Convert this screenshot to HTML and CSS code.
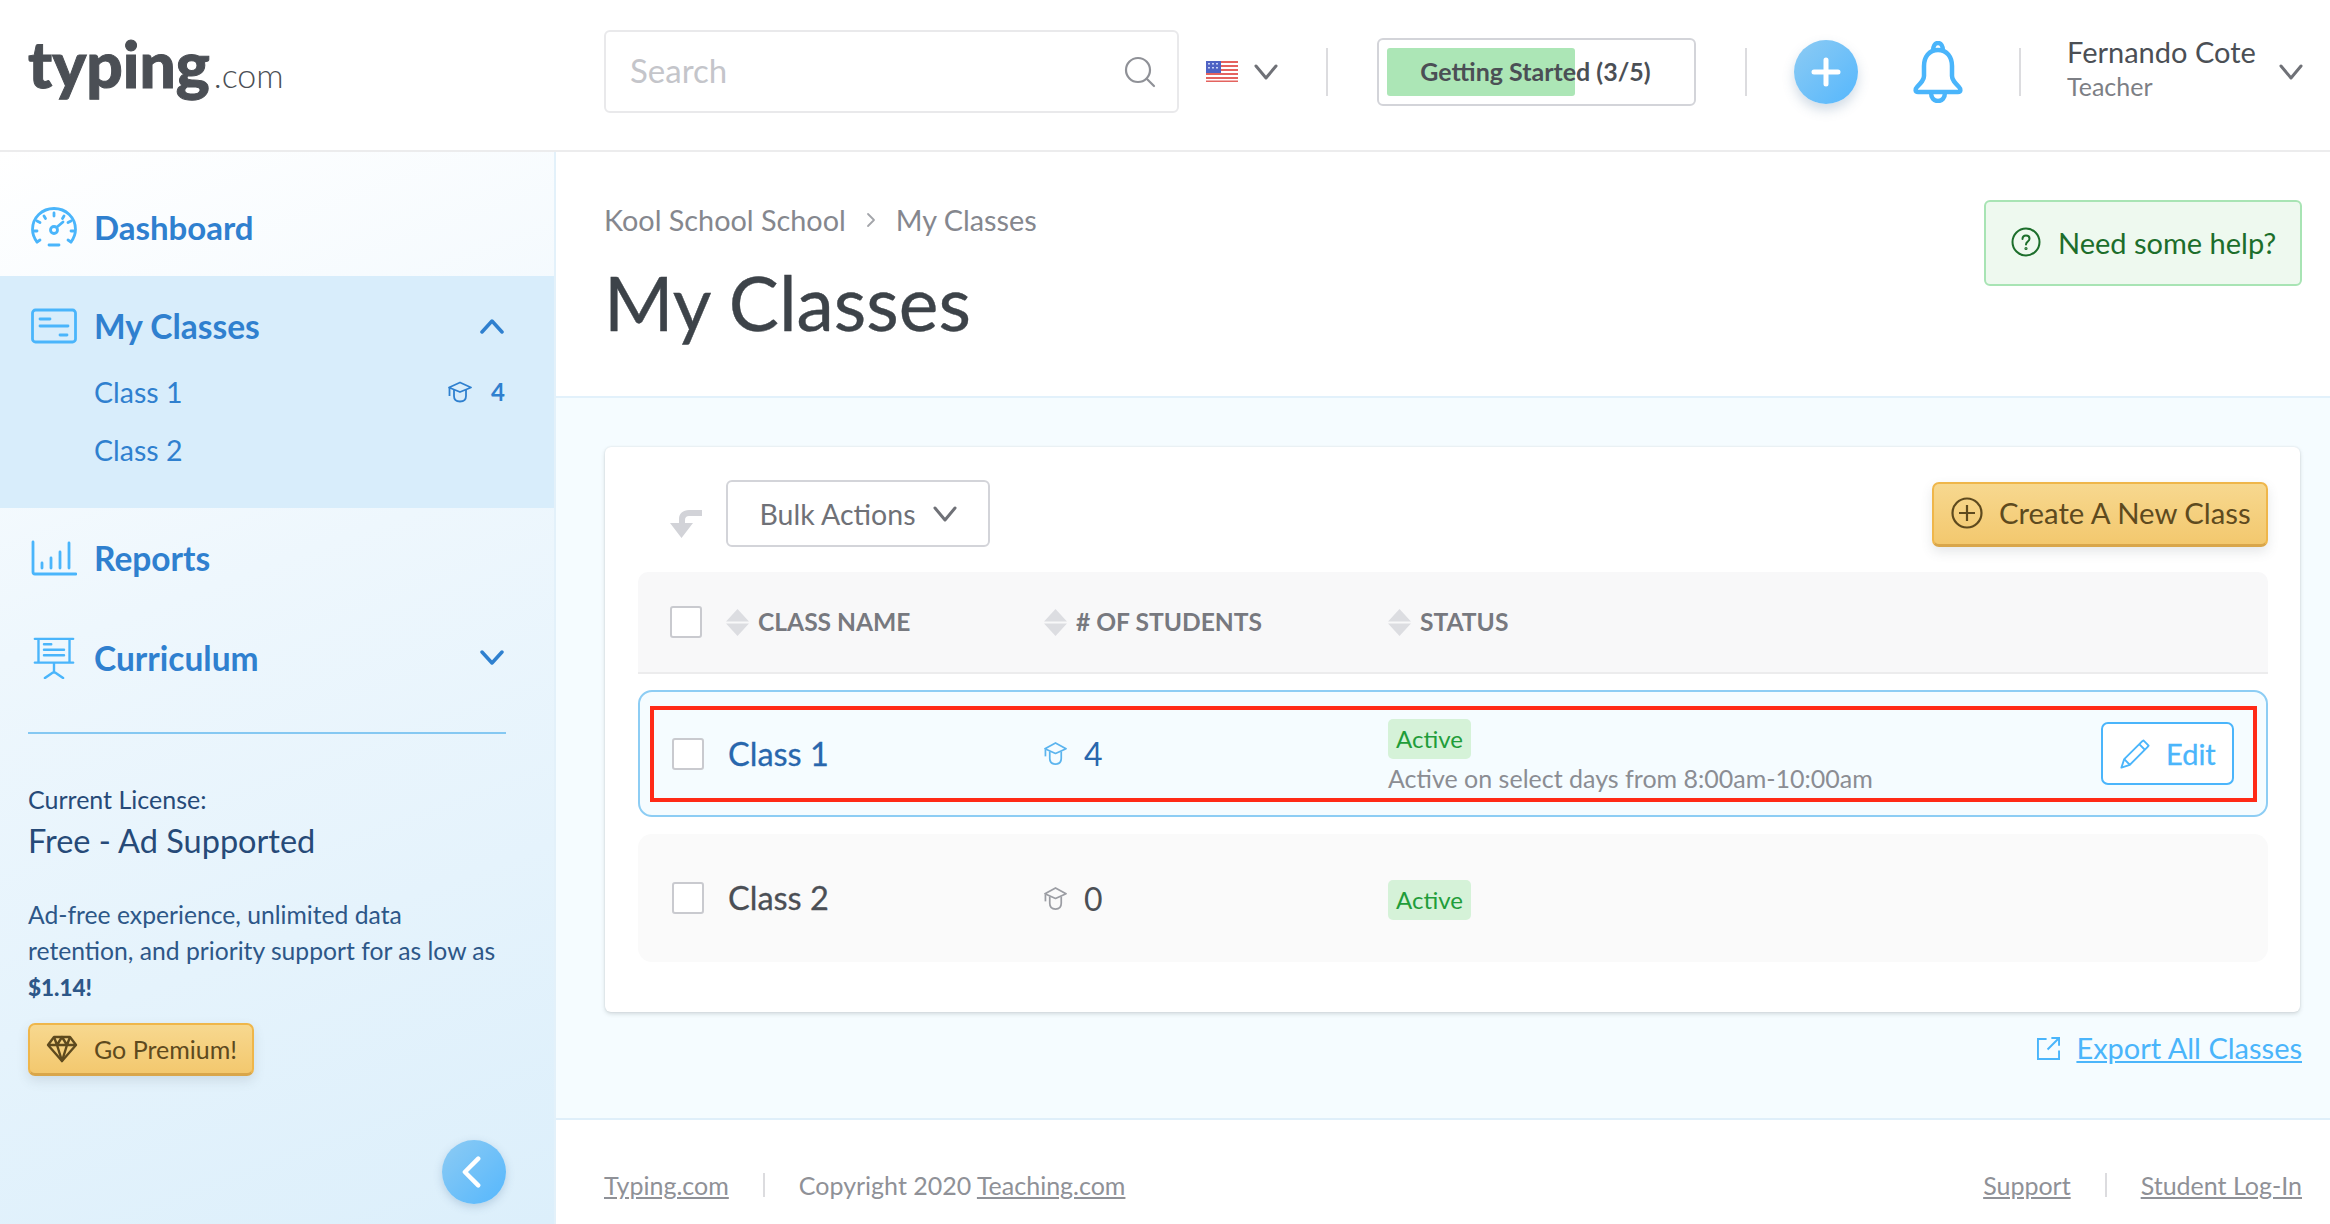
FILE: index.html
```html
<!DOCTYPE html>
<html lang="en">
<head>
<meta charset="utf-8">
<title>My Classes - typing.com</title>
<link rel="stylesheet" href="styles.css">
</head>
<body>
<header class="topbar">
  <div class="logo"><span class="logo-main">typing</span><span class="logo-com">.com</span></div>
  <div class="search">
    <span class="search-text">Search</span>
    <svg class="search-icon" viewBox="0 0 32 32" fill="none" stroke="#8f9197" stroke-width="2.2" stroke-linecap="round"><circle cx="14" cy="14" r="12"/><path d="M23 23l7 7"/></svg>
  </div>
  <svg class="flag" viewBox="0 0 32 21"><rect width="32" height="21" fill="#fff"/><g fill="#e4635f"><rect width="32" height="2"/><rect y="4" width="32" height="2"/><rect y="8" width="32" height="2"/><rect y="12" width="32" height="2"/><rect y="16" width="32" height="2"/><rect y="19.5" width="32" height="1.5"/></g><rect width="15" height="12" fill="#4f63c4"/><g fill="#c8d2f4"><rect x="2" y="2" width="2" height="1.5"/><rect x="6" y="2" width="2" height="1.5"/><rect x="10" y="2" width="2" height="1.5"/><rect x="2" y="6" width="2" height="1.5"/><rect x="6" y="6" width="2" height="1.5"/><rect x="10" y="6" width="2" height="1.5"/></g></svg>
  <svg class="chev flag-chev" viewBox="0 0 24 16" fill="none" stroke="#6f7177" stroke-width="3" stroke-linecap="round" stroke-linejoin="round"><path d="M2 2l10 12L22 2"/></svg>
  <span class="vline vline-a"></span>
  <div class="progress">
    <span class="progress-fill" style="width:59.7%"></span>
    <span class="progress-text">Getting Started (3/5)</span>
  </div>
  <span class="vline vline-b"></span>
  <div class="add-btn">
    <svg viewBox="0 0 32 32" fill="none" stroke="#fff" stroke-width="5" stroke-linecap="round"><path d="M16 4v24M4 16h24"/></svg>
  </div>
  <svg class="bell" viewBox="0 0 50 62" fill="none" stroke="#4ab5fb" stroke-width="4.5" stroke-linejoin="round"><path d="M25 9c-9 0-14 7-14 16v10c0 4-3 7-7 11-2 2-2 5 1 5h40c3 0 3-3 1-5-4-4-7-7-7-11V25c0-9-5-16-14-16z"/><path d="M20 10c0-5 2-8 5-8s5 3 5 8"/><path d="M18 51c0 6 3 9 7 9s7-3 7-9"/></svg>
  <span class="vline vline-c"></span>
  <div class="user">
    <div class="user-name">Fernando Cote</div>
    <div class="user-role">Teacher</div>
  </div>
  <svg class="chev user-chev" viewBox="0 0 24 16" fill="none" stroke="#6f7177" stroke-width="3" stroke-linecap="round" stroke-linejoin="round"><path d="M2 2l10 12L22 2"/></svg>
</header>

<div class="layout">
  <aside class="sidebar">
    <nav class="nav">
      <a class="nav-item nav-first">
        <svg class="nav-icon" viewBox="0 0 46 40" fill="none" stroke="#4ab5fb" stroke-width="2.8" stroke-linecap="round"><path d="M6 35C3 31 1.500 27 1.500 22.500 1.500 10.500 11 1.500 23 1.500s21.500 9 21.500 21c0 4.500-1.500 8.500-4.500 12.500"/><path d="M23 6v3M13 9l1.500 2.500M33 9l-1.500 2.500M6 14l3 1.500M40 14l-3 1.500M3 24h3M40 24h3M6 35l3-2M40 35l-3-2M18 38h10"/><circle cx="23" cy="23" r="3.500"/><path d="M26 20l6-5"/></svg>
        <span class="nav-label">Dashboard</span>
      </a>
      <div class="nav-group">
        <a class="nav-item nav-head">
          <svg class="nav-icon" viewBox="0 0 46 36" fill="none" stroke="#4ab5fb" stroke-width="2.8" stroke-linecap="round"><rect x="1.500" y="2" width="43" height="32" rx="3"/><path d="M9 11h10M9 18h28M29 27h7"/></svg>
          <span class="nav-label">My Classes</span>
          <svg class="nav-chev" viewBox="0 0 24 16" fill="none" stroke="#2f80cf" stroke-width="3.500" stroke-linecap="round" stroke-linejoin="round"><path d="M2 14L12 3l10 11"/></svg>
        </a>
        <a class="sub-item"><span class="sub-label">Class 1</span>
          <svg class="cap" viewBox="0 0 24 22" fill="none" stroke="#2f80cf" stroke-width="1.800" stroke-linejoin="round"><path d="M12 1.500L23 6.500 12 11 1 6.500z"/><path d="M6 9v6c0 3.500 2.500 5.500 6 5.500s6-2 6-5.500V9"/><path d="M1.500 7v8"/></svg>
          <span class="sub-count">4</span></a>
        <a class="sub-item"><span class="sub-label">Class 2</span></a>
      </div>
      <a class="nav-item">
        <svg class="nav-icon" viewBox="0 0 46 36" fill="none" stroke="#4ab5fb" stroke-width="2.800" stroke-linecap="round" stroke-linejoin="round"><path d="M2 2v30a2 2 0 0 0 2 2h41"/><path d="M11 23v5M20 18v10M29 12v16M38 3v25"/></svg>
        <span class="nav-label">Reports</span>
      </a>
      <a class="nav-item">
        <svg class="nav-icon" viewBox="0 0 46 46" fill="none" stroke="#4ab5fb" stroke-width="2.600" stroke-linecap="round"><path d="M2 2h42M2 28h42M6 2v26M40 2v26M23 28v11M23 38l-10 7M23 38l10 7M12 8h8M12 14h22M12 20h22"/></svg>
        <span class="nav-label">Curriculum</span>
        <svg class="nav-chev" viewBox="0 0 24 16" fill="none" stroke="#2f80cf" stroke-width="3.500" stroke-linecap="round" stroke-linejoin="round"><path d="M2 2l10 11L22 2"/></svg>
      </a>
    </nav>
    <div class="promo">
      <div class="license-label">Current License:</div>
      <div class="license-name">Free - Ad Supported</div>
      <p class="promo-text">Ad-free experience, unlimited data<br>retention, and priority support for as low as<br><strong>$1.14!</strong></p>
      <a class="btn-gold btn-premium">
        <svg class="gem" viewBox="0 0 32 28" fill="none" stroke="#5e4a1e" stroke-width="2.400" stroke-linejoin="round"><path d="M8 2h16l6 8-14 16L2 10z"/><path d="M2 10h28M11 10l5 16 5-16M8 2l3 8 5-8 5 8 3-8"/></svg>
        <span>Go Premium!</span>
      </a>
      <div class="collapse-row">
        <div class="collapse-btn"><svg viewBox="0 0 24 36" fill="none" stroke="#fff" stroke-width="5" stroke-linecap="round" stroke-linejoin="round"><path d="M19 3L4 18l15 15"/></svg></div>
      </div>
    </div>
  </aside>

  <main class="content">
    <section class="page-head">
      <div>
        <div class="crumbs"><span>Kool School School</span>
          <svg class="crumb-sep" viewBox="0 0 10 16" fill="none" stroke="#a3a5aa" stroke-width="1.800" stroke-linecap="round" stroke-linejoin="round"><path d="M2 2l6 6-6 6"/></svg>
          <span>My Classes</span></div>
        <h1 class="title">My Classes</h1>
      </div>
      <a class="help">
        <svg class="help-icon" viewBox="0 0 30 30" fill="none" stroke="#1c6e2b" stroke-width="2"><circle cx="15" cy="15" r="13.500"/><path d="M11.500 12c0-2.200 1.500-3.500 3.500-3.500s3.500 1.300 3.500 3.200c0 2.800-3.500 2.800-3.500 5.800" stroke-linecap="round"/><circle cx="15" cy="21.500" r=".6"/></svg>
        <span>Need some help?</span>
      </a>
    </section>

    <section class="body-area">
      <div class="card">
        <div class="toolbar">
          <svg class="undo" viewBox="0 0 32 28" fill="#d2d3d8"><path d="M32 0v6H19c-2.500 0-4 1.500-4 4v3h8L11.500 28 0 13h9v-4C9 3.500 13 0 19 0z"/></svg>
          <button class="bulk"><span>Bulk Actions</span>
            <svg class="bulk-chev" viewBox="0 0 24 16" fill="none" stroke="#6f7177" stroke-width="3" stroke-linecap="round" stroke-linejoin="round"><path d="M2 2l10 12L22 2"/></svg></button>
          <a class="btn-gold btn-create">
            <svg class="plus-circle" viewBox="0 0 32 32" fill="none" stroke="#5e4a1e" stroke-width="2.200"><circle cx="16" cy="16" r="14.500"/><path d="M16 8v16M8 16h16"/></svg>
            <span>Create A New Class</span>
          </a>
        </div>

        <div class="table-head row-grid">
          <span class="cell-name"><span class="checkbox head-check"></span>
            <svg class="sort" viewBox="0 0 23 27" fill="#dcdde1"><path d="M11.500 0L23 12.500H0zM0 14.500h23L11.500 27z"/></svg>
            <span class="th">CLASS NAME</span></span>
          <span class="cell-count"><svg class="sort" viewBox="0 0 23 27" fill="#dcdde1"><path d="M11.500 0L23 12.500H0zM0 14.500h23L11.500 27z"/></svg>
            <span class="th">&#35; OF STUDENTS</span></span>
          <span class="cell-status-head"><svg class="sort" viewBox="0 0 23 27" fill="#dcdde1"><path d="M11.500 0L23 12.500H0zM0 14.500h23L11.500 27z"/></svg>
            <span class="th">STATUS</span></span>
        </div>

        <div class="class-row row-active row-grid">
          <span class="cell-name"><span class="checkbox"></span><a class="class-name">Class 1</a></span>
          <span class="cell-count">
            <svg class="cap cap-row" viewBox="0 0 24 26" fill="none" stroke="#5bb4ee" stroke-width="1.800" stroke-linejoin="round"><path d="M12 2L23 8 12 13 1 8z"/><path d="M6 11v7c0 4 2.500 6 6 6s6-2 6-6v-7"/><path d="M1.500 9v7"/></svg>
            <span class="count">4</span></span>
          <div class="status-col">
            <span class="badge">Active</span>
            <span class="status-note">Active on select days from 8:00am-10:00am</span>
          </div>
          <a class="edit">
            <svg class="pencil" viewBox="0 0 32 32" fill="none" stroke="#4ab5fb" stroke-width="2" stroke-linejoin="round"><path d="M1.500 30.500l3-9L23 3l2-1.500 5.500 5.500L29 9 10.500 27.500z"/><path d="M4.500 21.500l6 6M20.500 5.500l6 6"/></svg>
            <span>Edit</span>
          </a>
          <span class="highlight"></span>
        </div>

        <div class="class-row row-plain row-grid">
          <span class="cell-name"><span class="checkbox"></span><a class="class-name">Class 2</a></span>
          <span class="cell-count">
            <svg class="cap cap-row" viewBox="0 0 24 26" fill="none" stroke="#9b9da3" stroke-width="1.800" stroke-linejoin="round"><path d="M12 2L23 8 12 13 1 8z"/><path d="M6 11v7c0 4 2.500 6 6 6s6-2 6-6v-7"/><path d="M1.500 9v7"/></svg>
            <span class="count">0</span></span>
          <div class="status-col status-plain"><span class="badge">Active</span></div>
        </div>
      </div>
      <div class="export-row">
        <svg class="export-icon" viewBox="0 0 24 24" fill="none" stroke="#4ab5fb" stroke-width="2"><path d="M10 2H1v21h22v-9"/><path d="M11 13L23 1M15 1h8v8"/></svg>
        <a class="export-link">Export All Classes</a>
      </div>
    </section>

    <footer class="footer">
      <div class="foot-group"><a>Typing.com</a><span class="foot-sep"></span><span>Copyright 2020 <a>Teaching.com</a></span></div>
      <div class="foot-group"><a>Support</a><span class="foot-sep"></span><a>Student Log-In</a></div>
    </footer>
  </main>
</div>
</body>
</html>
```
FILE: styles.css
```css
* { box-sizing: border-box; }
html, body { margin: 0; padding: 0; }
body {
  width: 2330px;
  height: 1224px;
  overflow: hidden;
  font-family: Lato, "Noto Sans", sans-serif;
  color: #4b4f55;
  background: #fff;
}
a { color: inherit; text-decoration: none; }
svg { display: block; flex: none; }

/* Top bar */
.topbar {
  height: 152px;
  border-bottom: 2px solid #ececed;
  display: flex;
  align-items: center;
  padding: 0 0 7px 28px;
  background: #fff;
}
.logo { width: 576px; display: flex; align-items: baseline; margin-bottom: 16px; color: #4b4f55; }
.logo-main { font-size: 64px; font-weight: 900; -webkit-text-stroke: 1px #4b4f55; line-height: 70px; }
.logo-com { font-size: 34px; font-weight: 300; margin-left: 4px; }
.search {
  width: 575px;
  height: 83px;
  border: 2px solid #e9e9eb;
  border-radius: 6px;
  display: flex;
  align-items: center;
  justify-content: space-between;
  padding: 0 21px 0 24px;
}
.search-text { font-size: 33px; color: #c4c5ca; margin-bottom: 3px; }
.search-icon { width: 32px; height: 32px; }
.flag { width: 32px; height: 21px; margin-left: 27px; }
.flag-chev { margin-left: 16px; }
.chev { width: 24px; height: 16px; }
.vline { width: 2px; height: 48px; background: #dcdcdf; flex: none; }
.vline-a { margin-left: 48px; }
.progress {
  position: relative;
  width: 319px;
  height: 68px;
  margin-left: 49px;
  border: 2px solid #d3d4d9;
  border-radius: 6px;
  display: flex;
  align-items: center;
  justify-content: center;
}
.progress-fill {
  position: absolute;
  left: 8px;
  top: 8px;
  bottom: 8px;
  background: #ace6b6;
  border-radius: 3px;
}
.progress-text { position: relative; font-size: 25px; font-weight: 700; color: #4b4f55; margin: 0 2px 1px 0; }
.vline-b { margin-left: 49px; }
.add-btn {
  width: 64px;
  height: 64px;
  margin-left: 47px;
  border-radius: 50%;
  background: linear-gradient(135deg, #8dcbf3, #55b7fd);
  box-shadow: 0 6px 12px rgba(70, 110, 150, .25);
  display: flex;
  align-items: center;
  justify-content: center;
}
.add-btn svg { width: 32px; height: 32px; }
.bell { width: 50px; height: 62px; margin-left: 55px; }
.vline-c { margin-left: 56px; }
.user { margin: 0 0 10px 46px; width: 212px; }
.user-name { font-size: 29px; line-height: 38px; color: #4b4f55; }
.user-role { font-size: 25px; line-height: 30px; margin-top: 0; color: #7d7f85; }
.user-chev { margin-left: 0; }

/* Layout */
.layout { display: flex; height: 1072px; }
.sidebar {
  width: 556px;
  flex: none;
  border-right: 2px solid #e3f1fa;
  background: linear-gradient(160deg, #ffffff 0%, #eef7fd 40%, #dceffb 100%);
}
.nav { padding-top: 25px; }
.nav-item {
  height: 100px;
  display: flex;
  align-items: center;
  padding: 0 50px 0 31px;
}
.nav-first { height: 99px; }
.nav-icon { width: 46px; height: 42px; }
.nav-label { font-size: 33.500px; font-weight: 700; color: #2f80cf; margin-left: 17px; flex: 1; }
.nav-first .nav-label { font-size: 33px; }
.nav-chev { width: 24px; height: 16px; }
.nav-group { background: #d8edfb; padding: 19px 0 30px; }
.nav-head { height: 62px; }
.sub-item {
  height: 57px;
  display: flex;
  align-items: center;
  padding: 0 50px 0 94px;
  color: #2f80cf;
}
.nav-head + .sub-item { margin-top: 6px; margin-bottom: 1px; }
.sub-label { font-size: 28.500px; flex: 1; }
.sub-count { font-size: 24px; font-weight: 700; margin-left: 19px; width: 13px; }
.cap { width: 24px; height: 22px; }

.promo { margin: 24px 48px 0 28px; border-top: 2px solid #85c8f2; padding-top: 48px; color: #264a78; }
.license-label { font-size: 25px; line-height: 34px; }
.license-name { font-size: 32.500px; line-height: 44px; margin-top: 3px; }
.promo-text { font-size: 24.700px; line-height: 36px; margin: 34px 0 17px; color: #2d5788; white-space: nowrap; }
.promo-text strong { font-size: 22.500px; font-weight: 900; }
.btn-gold {
  display: flex;
  align-items: center;
  border: 2px solid #efb64a;
  border-bottom: 3px solid #d9a64a;
  border-radius: 7px;
  background: linear-gradient(#f7d88f, #f3c86e);
  color: #5e4a1e;
  box-shadow: 0 5px 12px rgba(80, 90, 100, .14);
}
.btn-premium { width: 226px; height: 53px; padding-left: 16px; font-size: 25px; }
.gem { width: 32px; height: 28px; margin-right: 16px; }
.collapse-row { display: flex; justify-content: flex-end; margin-top: 64px; }
.collapse-btn {
  width: 64px;
  height: 64px;
  border-radius: 50%;
  background: linear-gradient(135deg, #8dcbf3, #55b7fd);
  box-shadow: 0 3px 8px rgba(70, 110, 150, .25);
  display: flex;
  align-items: center;
  justify-content: center;
}
.collapse-btn svg { width: 22px; height: 32px; margin-right: 4px; }

/* Content */
.content { flex: 1; min-width: 0; display: flex; flex-direction: column; }
.page-head {
  height: 246px;
  border-bottom: 2px solid #e2f1fb;
  padding: 48px 28px 0 48px;
  display: flex;
  justify-content: space-between;
  align-items: flex-start;
}
.crumbs { display: flex; align-items: center; font-size: 28.800px; line-height: 40px; color: #85878e; }
.crumb-sep { width: 10px; height: 16px; margin: 0 20px; }
.title { margin: 17px 0 0; font-size: 75px; line-height: 90px; font-weight: 400; color: #3d4349; -webkit-text-stroke: .4px #3d4349; }
.help {
  width: 318px;
  height: 86px;
  border: 2px solid #a8e4b4;
  border-radius: 6px;
  background: #eef9ef;
  display: flex;
  align-items: center;
  padding: 0 0 2px 25px;
  font-size: 29px;
  color: #1c6e2b;
}
.help-icon { width: 30px; height: 30px; margin-right: 17px; }

.body-area { height: 722px; background: #f5fcff; border-bottom: 2px solid #dfeffa; padding: 49px 28px 0 49px; }
.card {
  width: 1695px;
  height: 565px;
  background: #fff;
  border-radius: 6px;
  padding: 33px 32px 0 33px;
  box-shadow: 0 2px 4px rgba(60, 70, 80, .18), 0 0 2px rgba(60, 70, 80, .14);
}
.toolbar { display: flex; align-items: flex-start; height: 92px; padding-left: 32px; }
.undo { width: 32px; height: 28px; margin-top: 30px; }
.bulk {
  width: 264px;
  height: 67px;
  margin-left: 24px;
  border: 2px solid #d3d4d9;
  border-radius: 6px;
  background: #fff;
  display: flex;
  align-items: center;
  justify-content: center;
  gap: 17px;
  font-family: inherit;
  font-size: 28.500px;
  color: #6f7177;
}
.bulk-chev { width: 24px; height: 16px; }
.btn-create { margin-left: auto; margin-top: 2px; width: 336px; height: 65px; padding: 0 0 4px 17px; font-size: 29.300px; }
.plus-circle { width: 32px; height: 32px; margin-right: 16px; margin-top: 2px; }

.row-grid { display: grid; grid-template-columns: 374px 344px 1fr auto; align-items: center; }
.table-head {
  height: 102px;
  background: #f8f8f9;
  border-bottom: 2px solid #ececed;
  border-radius: 10px 10px 0 0;
  padding-left: 32px;
}
.cell-name, .cell-count, .cell-status-head { display: flex; align-items: center; }
.cell-status-head { grid-column: 3; }
.checkbox {
  width: 32px;
  height: 32px;
  flex: none;
  border: 2px solid #c9cacf;
  border-radius: 3px;
  background: #fff;
  margin-right: 24px;
}
.sort { width: 23px; height: 27px; margin-right: 9px; }
.th { font-size: 24.600px; font-weight: 700; color: #77797f; margin-bottom: 2px; }

.class-row { position: relative; height: 128px; border-radius: 14px; }
.row-active { margin-top: 16px; border: 2px solid #8dcdf4; background: #f5fcff; padding: 0 32px; height: 127px; }
.row-plain { margin-top: 17px; background: #fafafa; padding: 0 34px; }
.row-active { grid-template-columns: 372px 344px 1fr auto; }
.row-plain { grid-template-columns: 372px 344px 1fr; }
.class-name { font-size: 32.500px; -webkit-text-stroke: .3px currentColor; }
.row-active .class-name { color: #2867ad; }
.row-plain .class-name { color: #4b4f55; margin-bottom: 2px; }
.cap-row { width: 23px; height: 25px; margin-right: 17px; }
.count { font-size: 32px; }
.row-active .count { color: #2867ad; }
.status-col { display: flex; flex-direction: column; align-items: flex-start; padding-top: 8px; }
.status-plain { padding-top: 3px; }
.badge {
  height: 40px;
  padding: 0 8px;
  display: flex;
  align-items: center;
  background: #d5f2d8;
  border-radius: 5px;
  font-size: 24px;
  color: #1f9d3a;
}
.status-note { font-size: 25px; line-height: 38px; color: #8b8d93; margin-top: 0; }
.edit {
  width: 133px;
  height: 63px;
  border: 2px solid #4ab5fb;
  border-radius: 7px;
  background: #fff;
  display: flex;
  align-items: center;
  padding-left: 17px;
  font-size: 29px;
  -webkit-text-stroke: .3px #4ab5fb;
  color: #4ab5fb;
}
.pencil { width: 30px; height: 30px; margin-right: 16px; }
.highlight {
  position: absolute;
  top: 14px;
  bottom: 13px;
  left: 10px;
  right: 9px;
  border: 4px solid #ff2a17;
  pointer-events: none;
}

.export-row { display: flex; justify-content: flex-end; align-items: center; margin-top: 17px; height: 36px; }
.export-icon { width: 23px; height: 23px; margin: 2px 16px 0 0; }
.export-link { font-size: 29px; color: #4ab5fb; text-decoration: underline; }

.footer {
  flex: 1;
  display: flex;
  justify-content: space-between;
  align-items: center;
  padding: 26px 28px 0 48px;
  font-size: 25px;
  color: #8f9197;
}
.foot-group { display: flex; align-items: center; white-space: pre; }
.foot-group a { text-decoration: underline; }
.foot-sep { width: 2px; height: 24px; background: #dcdcdf; margin: 0 34px; }
```
